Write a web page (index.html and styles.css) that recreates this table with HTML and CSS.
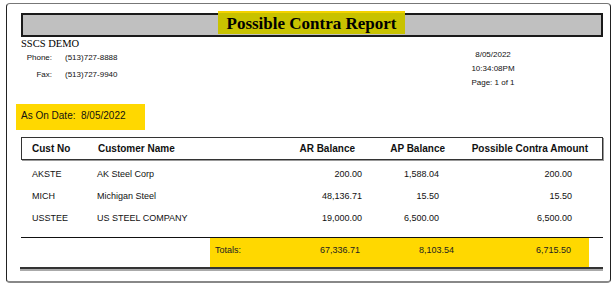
FILE: index.html
```html
<!DOCTYPE html>
<html>
<head>
<meta charset="utf-8">
<link rel="stylesheet" href="styles.css">
</head>
<body>
<div class="frame">
  <div class="titlebar">
    <h1 class="title">Possible Contra Report</h1>
  </div>
  <div class="company">SSCS DEMO</div>
  <div class="info">
    <div class="contact">
      <span class="lbl">Phone:</span><span>(513)727-8888</span>
      <span class="lbl">Fax:</span><span>(513)727-9940</span>
    </div>
    <div class="meta">
      <span>8/05/2022</span>
      <span>10:34:08PM</span>
      <span>Page: 1 of 1</span>
    </div>
  </div>
  <div class="asof">As On Date:&nbsp; 8/05/2022</div>
  <div class="thead">
    <span class="c1">Cust No</span>
    <span class="c2">Customer Name</span>
    <span class="c3">AR Balance</span>
    <span class="c4">AP Balance</span>
    <span class="c5">Possible Contra Amount</span>
  </div>
  <div class="row">
    <span class="c1">AKSTE</span>
    <span class="c2">AK Steel Corp</span>
    <span class="c3">200.00</span>
    <span class="c4">1,588.04</span>
    <span class="c5">200.00</span>
  </div>
  <div class="row">
    <span class="c1">MICH</span>
    <span class="c2">Michigan Steel</span>
    <span class="c3">48,136.71</span>
    <span class="c4">15.50</span>
    <span class="c5">15.50</span>
  </div>
  <div class="row">
    <span class="c1">USSTEE</span>
    <span class="c2">US STEEL COMPANY</span>
    <span class="c3">19,000.00</span>
    <span class="c4">6,500.00</span>
    <span class="c5">6,500.00</span>
  </div>
  <div class="totals">
    <div class="totbox">
      <span class="tlabel">Totals:</span>
      <span>67,336.71</span>
      <span>8,103.54</span>
      <span>6,715.50</span>
    </div>
  </div>
  <div class="dblline"></div>
</div>
</body>
</html>
```

FILE: styles.css
```css
html, body {
  margin: 0;
  padding: 0;
  background: #fff;
}
body {
  width: 615px;
  height: 290px;
  font-family: "Liberation Sans", Arial, sans-serif;
  color: #111;
}
.frame {
  box-sizing: border-box;
  margin: 3px 0 0 6px;
  width: 605px;
  height: 280px;
  border-left: 1px solid #222;
  border-right: 1px solid #222;
  border-top: 1px solid #777;
  border-bottom: 2px solid #888;
  border-radius: 4px;
  padding: 9px 7px 0 14px;
}
.titlebar {
  position: relative;
  box-sizing: border-box;
  height: 24px;
  border: 2px solid #1a1a1a;
  background: #c0c0c0;
}
.title {
  position: absolute;
  left: 195px;
  top: -4px;
  width: 187px;
  height: 23px;
  margin: 0;
  background: linear-gradient(#f3d200 0 2px, #c8c200 2px);
  font-family: "Liberation Serif", "Times New Roman", serif;
  font-weight: bold;
  font-size: 17px;
  line-height: 25px;
  text-align: center;
  color: #000;
}
.company {
  font-family: "Liberation Serif", "Times New Roman", serif;
  font-size: 10.5px;
  line-height: 12px;
  margin-top: 1px;
  color: #000;
}
.info {
  display: flex;
  justify-content: space-between;
  font-size: 8px;
}
.contact {
  display: grid;
  grid-template-columns: 31px auto;
  column-gap: 13px;
  row-gap: 7px;
  line-height: 10px;
  margin-top: 3px;
  align-content: start;
}
.lbl {
  text-align: right;
}
.meta {
  display: flex;
  flex-direction: column;
  align-items: center;
  width: 60px;
  margin-right: 80px;
  line-height: 14px;
  margin-top: -2px;
}
.asof {
  box-sizing: border-box;
  width: 129px;
  height: 26px;
  margin: 14px 0 0 -5px;
  padding-left: 5px;
  background: #ffd800;
  font-size: 10px;
  line-height: 24px;
  color: #111;
}
.thead, .row {
  display: grid;
  grid-template-columns: 76px 193px 75px 95px 1fr;
}
.thead {
  box-sizing: border-box;
  height: 23px;
  margin-top: 7px;
  border: 1px solid #333;
  box-shadow: 1px 1px 0 #999;
  font-weight: bold;
  font-size: 10px;
  line-height: 21px;
  color: #111;
}
.thead .c1 { padding-left: 10px; }
.thead .c3 { text-align: right; padding-right: 11px; }
.thead .c4 { text-align: right; padding-right: 16px; }
.thead .c5 { text-align: right; padding-right: 14px; }
.row {
  height: 22px;
  font-size: 9px;
  line-height: 22px;
  color: #111;
}
.thead + .row { margin-top: 3px; }
.row .c1 { padding-left: 11px; }
.row .c3 { text-align: right; padding-right: 3px; }
.row .c4 { text-align: right; padding-right: 21px; }
.row .c5 { text-align: right; padding-right: 31px; }
.totals {
  margin-top: 8px;
  border-top: 1px solid #111;
  padding-left: 189px;
}
.totbox {
  display: grid;
  grid-template-columns: 80px 70px 94px 117px;
  width: 379px;
  height: 29px;
  background: #ffd800;
  font-size: 9px;
  line-height: 24px;
  color: #222;
}
.totbox span { text-align: right; }
.totbox .tlabel { text-align: left; padding-left: 5px; }
.dblline {
  height: 2px;
  border-top: 2px solid #333;
  background: #aaa;
  margin-left: -1px;
}
```
